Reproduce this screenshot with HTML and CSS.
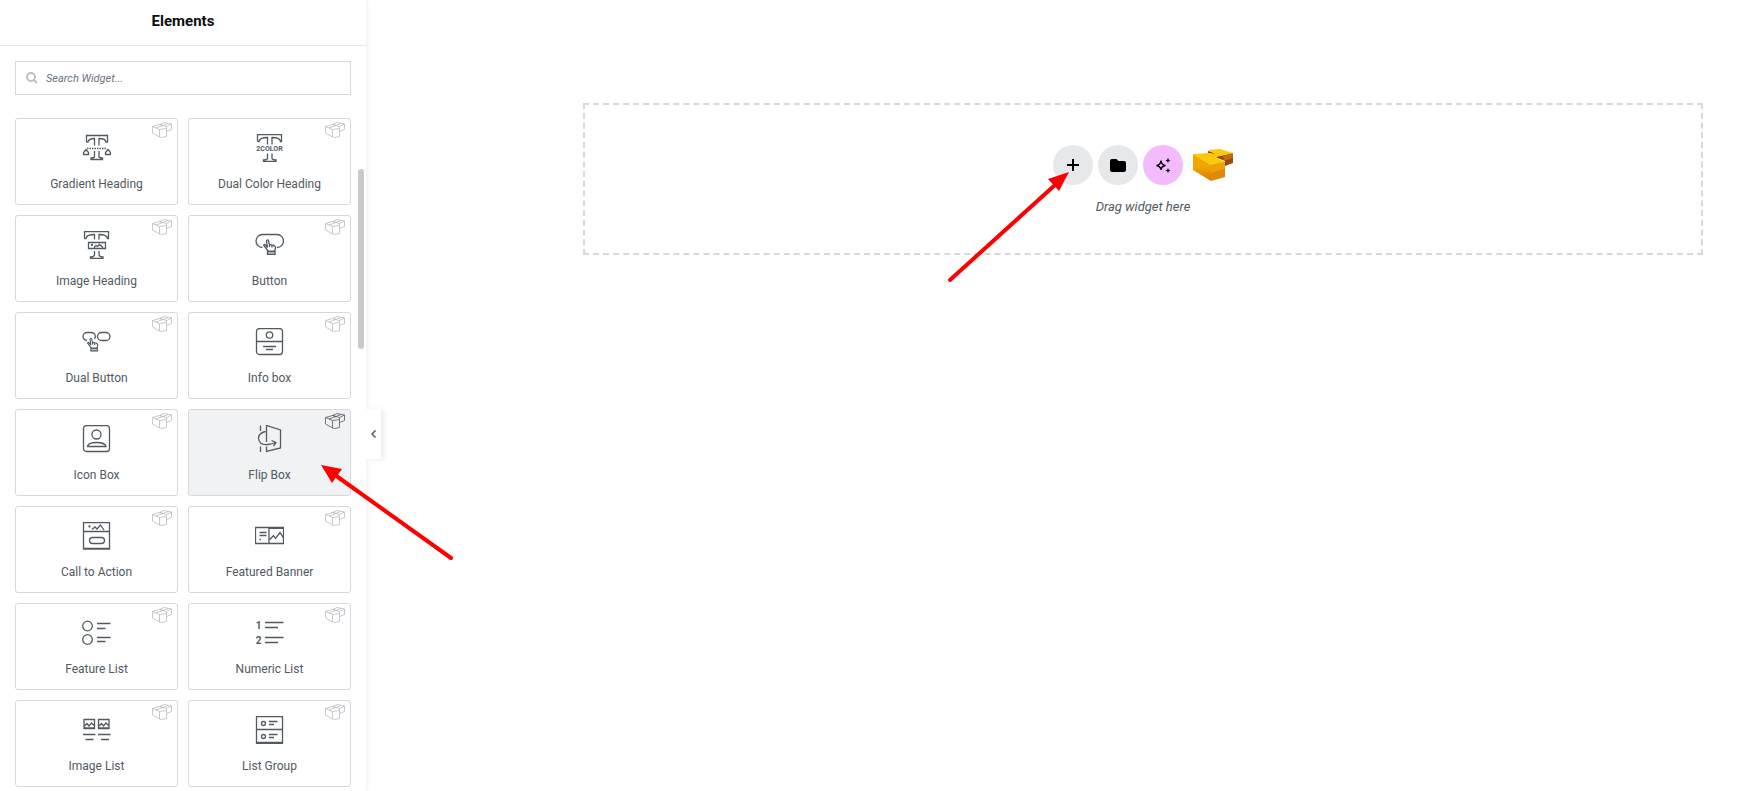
FILE: index.html
```html
<!DOCTYPE html>
<html lang="en">
<head>
  <meta charset="UTF-8">
  <meta name="viewport" content="width=device-width, initial-scale=1.0">
  <title>Elements</title>
  <link rel="stylesheet" href="styles.css">
</head>
<body>
  <!-- Shared shapes -->
  <svg class="sprite" aria-hidden="true">
    <symbol id="brick" viewBox="0 0 20 16">
      <path d="M.5 4.500 7.500 7.500V15L.5 11ZM7.500 7.500 14.500 6.500V14.500L9.500 15.500 7.500 15M.5 4.500 7.500 2.500 14.500 4.500V6.500M7.500 2.500 12 .5 19.500 2V7.500L14.500 9.500M14.500 4.500 19.500 2M4 6 11 3.500 16 1.500M7.500 2.500 11 3.500"/>
    </symbol>
    <symbol id="hand" viewBox="0 0 14 16">
      <path d="M4.500 8.500 3.500 2Q4.500.2 5.500 1.500L6.500 6 8 5.500 9 6.500 10.500 6 11.500 7.200Q12.800 7 12.500 9L11.500 12.500H5.500L.7 6.300Q1 4.500 2.500 6L4.500 8.500M6.500 5.500V8M9 6.500V8.500"/>
      <path d="M4.500 12.500H12V15.500H4.500Z" fill="#c8cbd0"/>
    </symbol>
  </svg>

  <div class="editor">
    <!-- Widget panel -->
    <aside class="panel">
      <header class="panel-header">
        <h1>Elements</h1>
      </header>
      <div class="search">
        <label for="search" aria-label="Search Widget">
          <svg class="search-icon" viewBox="0 0 12 12"><circle cx="5" cy="5" r="4"/><path d="M8 8 11 11"/></svg>
        </label>
        <input type="search" id="search" placeholder="Search Widget...">
      </div>

      <div class="widgets">
        <button type="button" class="widget">
          <svg class="badge"><use href="#brick"/></svg>
          <svg class="icon" viewBox="0 0 29 28">
            <path d="M4.500 8V1.500H25.500V8H24Q23.500 4.500 17 4.500V11.500M4.500 8H6Q6.500 4.500 12.500 4.500V11.500M12.500 17V23Q11.500 24 9 24V25.500H20.500V24Q18 24 17 23V17"/>
            <path d="M5 14.500H25" stroke-dasharray="1.500 1"/>
            <path d="M4 15.500 1.500 18.500V20.500H6.500V18.500ZM26 15.500 23.500 18.500V20.500H28.500V18.500Z"/>
          </svg>
          <span>Gradient Heading</span>
        </button>
        <button type="button" class="widget">
          <svg class="badge"><use href="#brick"/></svg>
          <svg class="icon" viewBox="0 0 29 28">
            <path d="M2.500 7.500V.5H26.500V7.500H25.500Q25 3.500 17 3.500V10.500M2.500 7.500H4Q4.500 3.500 12.500 3.500V10.500M12.500 19.500V24.500Q12 26 8.500 26V27.500H21V26Q17.500 26 17 24.500V19.500"/>
            <text x="14.500" y="17" class="icon-word">2COLOR</text>
          </svg>
          <span>Dual Color Heading</span>
        </button>
        <button type="button" class="widget">
          <svg class="badge"><use href="#brick"/></svg>
          <svg class="icon" viewBox="0 0 29 28">
            <path d="M2.500 7.500V.5H26.500V7.500H25.500Q25 3.500 17 3.500V8.500M2.500 7.500H4Q4.500 3.500 12.500 3.500V8.500M6.500 11.500H23.500V17.500H6.500ZM12 16.500 14 14.500 15.500 15.500 17.500 13.500 21 16.500M12.500 20V24Q12 26 8.500 26V27.500H21V26Q17.500 26 17 24V20"/>
            <circle cx="10" cy="14" r=".5"/>
          </svg>
          <span>Image Heading</span>
        </button>
        <button type="button" class="widget">
          <svg class="badge"><use href="#brick"/></svg>
          <svg class="icon" viewBox="0 0 29 28">
            <path d="M7.500 16.500A6.500 6.500 0 0 1 7.500 3.500H22A6.500 6.500 0 0 1 22 16.500"/>
            <use href="#hand" x="8" y="8" width="14" height="16"/>
          </svg>
          <span>Button</span>
        </button>
        <button type="button" class="widget">
          <svg class="badge"><use href="#brick"/></svg>
          <svg class="icon" viewBox="0 0 29 28">
            <path d="M5 12.500A4 4 0 0 1 5 4.500H9.500A4 4 0 0 1 12.500 11"/>
            <rect x="15.500" y="4.500" width="12.500" height="8" rx="4"/>
            <use href="#hand" x="5" y="9" width="12" height="15"/>
          </svg>
          <span>Dual Button</span>
        </button>
        <button type="button" class="widget">
          <svg class="badge"><use href="#brick"/></svg>
          <svg class="icon" viewBox="0 0 29 28">
            <rect x="1.500" y=".5" width="26" height="26" rx="3"/>
            <circle cx="14.500" cy="7" r="3.200"/>
            <path d="M1.500 13.500H27.500M8 18.500H21M11 21.500H18"/>
          </svg>
          <span>Info box</span>
        </button>
        <button type="button" class="widget">
          <svg class="badge"><use href="#brick"/></svg>
          <svg class="icon" viewBox="0 0 29 28">
            <rect x="1.500" y=".5" width="26" height="26" rx="3"/>
            <circle cx="14.500" cy="9.500" r="4.500"/>
            <path d="M5.500 21.500Q6 17.500 14.500 17.500T24 21.500Z"/>
          </svg>
          <span>Icon Box</span>
        </button>
        <div class="widget-slot">
          <button type="button" class="widget active">
            <svg class="badge"><use href="#brick"/></svg>
            <svg class="icon" viewBox="0 0 29 28">
              <path d="M11.500 17V.5L25.500 5V23L11.500 26.500V21.500M5.500.5V6M5.500 21.500V27M10.500 6.500Q3.500 8 3.500 13.500Q4.500 20.500 13 19.500Q17 19 21 17.500M16.500 15.500 21 17.500 18.500 21"/>
            </svg>
            <span>Flip Box</span>
          </button>
          <svg class="arrow arrow-widget" viewBox="0 0 134 98" aria-hidden="true">
            <path class="shaft" d="M14 10 130 93"/>
            <path class="head" d="M0 0 21 4 11 18Z"/>
          </svg>
        </div>
        <button type="button" class="widget">
          <svg class="badge"><use href="#brick"/></svg>
          <svg class="icon" viewBox="0 0 29 28">
            <path d="M1.500.5H27.500V27H1.500ZM1.500 26.500H27.500M1.500 9.500H27.500M10 7.500 13 5 15 7 18.500 3 22 8"/>
            <circle cx="7.500" cy="4.500" r=".5"/>
            <rect x="7.500" y="15.500" width="15" height="6" rx="3"/>
          </svg>
          <span>Call to Action</span>
        </button>
        <button type="button" class="widget">
          <svg class="badge"><use href="#brick"/></svg>
          <svg class="icon" viewBox="0 0 29 28">
            <path d="M.5 5.500H28.500V21.500H.5ZM14 6.300H28.500M14 5.500V21.500M4.500 10.500H11.500M4.500 13.500H11.500M4.500 17.500H6M15 17.500 18.500 13.500 20.500 16.500 25 10.500 28.500 16"/>
          </svg>
          <span>Featured Banner</span>
        </button>
        <button type="button" class="widget">
          <svg class="badge"><use href="#brick"/></svg>
          <svg class="icon" viewBox="0 0 29 28">
            <circle cx="5.500" cy="7" r="4.800"/>
            <circle cx="5.500" cy="20.500" r="4.800"/>
            <path d="M15 4.500H28.500M15 9.500H23.500M15 18.500H28.500M15 22.500H23.500"/>
          </svg>
          <span>Feature List</span>
        </button>
        <button type="button" class="widget">
          <svg class="badge"><use href="#brick"/></svg>
          <svg class="icon" viewBox="0 0 29 28">
            <text x="3.500" y="10" class="icon-digit">1</text>
            <text x="3.500" y="25" class="icon-digit">2</text>
            <path d="M10 3.500H28.500M10 8.500H23M10 18.500H28.500M10 23.500H23"/>
          </svg>
          <span>Numeric List</span>
        </button>
        <button type="button" class="widget">
          <svg class="badge"><use href="#brick"/></svg>
          <svg class="icon" viewBox="0 0 29 28">
            <path d="M2 3.500H12.500V12.500H2ZM2 12H12.500M2.500 10 5 7.500 7 10 9.500 7 12 9.500M16.500 3.500H27V12.500H16.500ZM16.500 12H27M17 10 19.500 7.500 21.500 10 24 7 26.500 9.500M1 18.500H13.500M16 18.500H28.500M3.500 23.500H11.500M19 23.500H27"/>
          </svg>
          <span>Image List</span>
        </button>
        <button type="button" class="widget">
          <svg class="badge"><use href="#brick"/></svg>
          <svg class="icon" viewBox="0 0 29 28">
            <path d="M1.500.5H27.500V27.500H1.500ZM1.500 26.500H27.500M1.500 13.500H27.500M14 5.500H22.500M14 8.500H19M14 18.500H22.500M14 21.500H19"/>
            <circle cx="8.500" cy="7.500" r="2"/>
            <circle cx="8.500" cy="20.500" r="2"/>
          </svg>
          <span>List Group</span>
        </button>
      </div>

      <div class="scroll-thumb"></div>
      <button type="button" class="collapse" aria-label="Hide panel">
        <svg viewBox="0 0 6 8"><path d="M4.500.5 1 4 4.500 7.500"/></svg>
      </button>
    </aside>

    <!-- Canvas -->
    <main class="canvas">
      <section class="drop-area">
        <div class="actions">
          <div class="action-slot">
            <button type="button" class="action" aria-label="Add new container">
              <svg viewBox="0 0 20 20"><path class="line" d="M10 4V16M4 10H16"/></svg>
            </button>
            <svg class="arrow arrow-add" viewBox="0 0 122 112" aria-hidden="true">
              <path class="shaft" d="M108 13 3 108"/>
              <path class="head" d="M122 0 101 7 112 19Z"/>
            </svg>
          </div>
          <button type="button" class="action" aria-label="Add template">
            <svg viewBox="0 0 20 20"><path d="M4 4H8.500L10.500 6H16Q18 6 18 8V15Q18 17 16 17H4Q2 17 2 15V6Q2 4 4 4Z"/></svg>
          </button>
          <button type="button" class="action ai" aria-label="Build with AI">
            <svg viewBox="0 0 20 20">
              <path class="star" d="M8 5.500Q8.500 10 12.500 10.500Q8.500 11 8 15Q7.500 11 3.500 10.500Q7.500 10 8 5.500Z"/>
              <path d="M15 3 15.800 4.700 17.500 5.500 15.800 6.300 15 8 14.200 6.300 12.500 5.500 14.200 4.700ZM15 13 15.800 14.700 17.500 15.500 15.800 16.300 15 18 14.200 16.300 12.500 15.500 14.200 14.700Z"/>
            </svg>
          </button>
          <button type="button" class="action library" aria-label="Block library">
            <svg viewBox="0 0 40 32">
              <defs>
                <linearGradient id="side" x1="0" y1="0" x2="0" y2="1">
                  <stop offset=".45" stop-color="#f0a800"/>
                  <stop offset="1" stop-color="#d97c04"/>
                </linearGradient>
              </defs>
              <path fill="#9a4a06" d="M15 2 22 4 21 6 15 4ZM22 8 40 4V14L32 17V12Z"/>
              <path fill="#c26a0c" d="M30 7 40 4V9L31 12Z"/>
              <path fill="#fbc90a" d="M15 1 27 0 40 4 22 8 32 13 18 16 0 5 17 4 22 5Z"/>
              <path fill="url(#side)" d="M0 5 18 16V32L0 21Z"/>
              <path fill="#dc8a08" d="M18 16 32 13V28L18 32Z"/>
              <path fill="#ee9f0a" d="M18 16 32 13V20L18 24Z"/>
            </svg>
          </button>
        </div>
        <p>Drag widget here</p>
      </section>
    </main>
  </div>
</body>
</html>
```
FILE: styles.css
```css
* {
  box-sizing: border-box;
}
body {
  margin: 0;
  font-family: Roboto, Arial, sans-serif;
  font-size: 12px;
  color: #515962;
  background-color: #ffffff;
  overflow: hidden;
}
button {
  font-family: inherit;
  cursor: pointer;
}
.sprite {
  display: none;
}
.editor {
  display: flex;
  min-height: 100vh;
}

/* Panel */
.panel {
  position: relative;
  z-index: 1;
  flex: 0 0 366px;
  background-color: #ffffff;
  box-shadow: 1px 0 5px rgba(0, 0, 0, 0.08);
}
.panel-header {
  display: flex;
  align-items: center;
  justify-content: center;
  height: 46px;
  padding-bottom: 4px;
  border-bottom: 1px solid #e6e8ea;
}
h1 {
  margin: 0;
  font-size: 15px;
  font-weight: bold;
  color: #0c0d0e;
}
.search {
  display: flex;
  align-items: center;
  gap: 8px;
  height: 34px;
  margin: 15px 15px 23px;
  padding: 0 10px;
  border: 1px solid #d5d8dc;
}
.search label {
  display: flex;
}
.search-icon {
  width: 12px;
  height: 12px;
  fill: none;
  stroke: #babfc5;
  stroke-width: 2;
}
.search input {
  flex: 1;
  min-width: 0;
  padding: 0;
  border: none;
  outline: none;
  background: none;
  font: italic 11px Roboto, Arial, sans-serif;
  color: #515962;
}
.search input::placeholder {
  color: #69727d;
}
.widgets {
  display: grid;
  grid-template-columns: 1fr 1fr;
  gap: 10px;
  padding: 0 15px;
}
.widget-slot {
  position: relative;
  display: grid;
}
.widget {
  position: relative;
  display: flex;
  flex-direction: column;
  align-items: center;
  gap: 15px;
  height: 87px;
  padding: 15px 0 0;
  border: 1px solid #d5d8dc;
  border-radius: 3px;
  background-color: #ffffff;
  font-size: 12px;
  line-height: 14px;
  color: #515962;
}
.widget.active {
  background-color: #f1f2f3;
}
.icon {
  width: 29px;
  height: 28px;
  fill: none;
  stroke: #515962;
  stroke-width: 1.3;
}
.icon text {
  fill: #515962;
  stroke: none;
  font-weight: bold;
  text-anchor: middle;
}
.icon-word {
  font-size: 7px;
}
.icon-digit {
  font-size: 10px;
}
.badge {
  position: absolute;
  top: 3px;
  right: 5px;
  width: 20px;
  height: 16px;
  fill: none;
  stroke: #b8bcc1;
  stroke-width: 0.8;
}
.widget.active .badge {
  stroke: #515962;
}
.scroll-thumb {
  position: absolute;
  top: 169px;
  right: 2px;
  width: 6px;
  height: 180px;
  border-radius: 3px;
  background-color: #c9c9c9;
}
.collapse {
  position: absolute;
  top: 409px;
  left: 100%;
  display: flex;
  align-items: center;
  justify-content: center;
  width: 15px;
  height: 50px;
  padding: 0;
  border: none;
  background-color: #ffffff;
  box-shadow: 3px 1px 5px rgba(0, 0, 0, 0.08);
}
.collapse svg {
  width: 6px;
  height: 8px;
  fill: none;
  stroke: #515962;
  stroke-width: 1.5;
}

/* Canvas */
.canvas {
  flex: 1;
  padding: 103px 52px 0 217px;
}
.drop-area {
  display: flex;
  flex-direction: column;
  align-items: center;
  gap: 14px;
  padding: 40px 0 38px;
  border: 2px dashed #d5d8dc;
}
.drop-area p {
  margin: 0;
  font-size: 13px;
  font-style: italic;
  line-height: 16px;
}
.actions {
  display: flex;
  gap: 5px;
}
.action-slot {
  position: relative;
}
.action {
  display: flex;
  align-items: center;
  justify-content: center;
  width: 40px;
  height: 40px;
  padding: 0;
  border: none;
  border-radius: 50%;
  background-color: #e6e8ea;
}
.action svg {
  width: 20px;
  height: 20px;
}
.action .line {
  stroke: #000000;
  stroke-width: 2;
}
.action .star {
  fill: none;
  stroke: #000000;
  stroke-width: 1.3;
}
.action.ai {
  background-color: #f3bafd;
}
.action.library {
  margin-left: 5px;
  border-radius: 0;
  background: none;
}
.action.library svg {
  width: 40px;
  height: 32px;
}

/* Pointers */
.arrow {
  position: absolute;
  z-index: 2;
  pointer-events: none;
}
.arrow .shaft {
  fill: none;
  stroke: #ff0000;
  stroke-width: 4;
  stroke-linecap: round;
}
.arrow .head {
  fill: #ff0000;
}
.arrow-widget {
  top: 56px;
  left: 133px;
  width: 134px;
  height: 98px;
}
.arrow-add {
  top: 27px;
  right: 24px;
  width: 122px;
  height: 112px;
}
```
